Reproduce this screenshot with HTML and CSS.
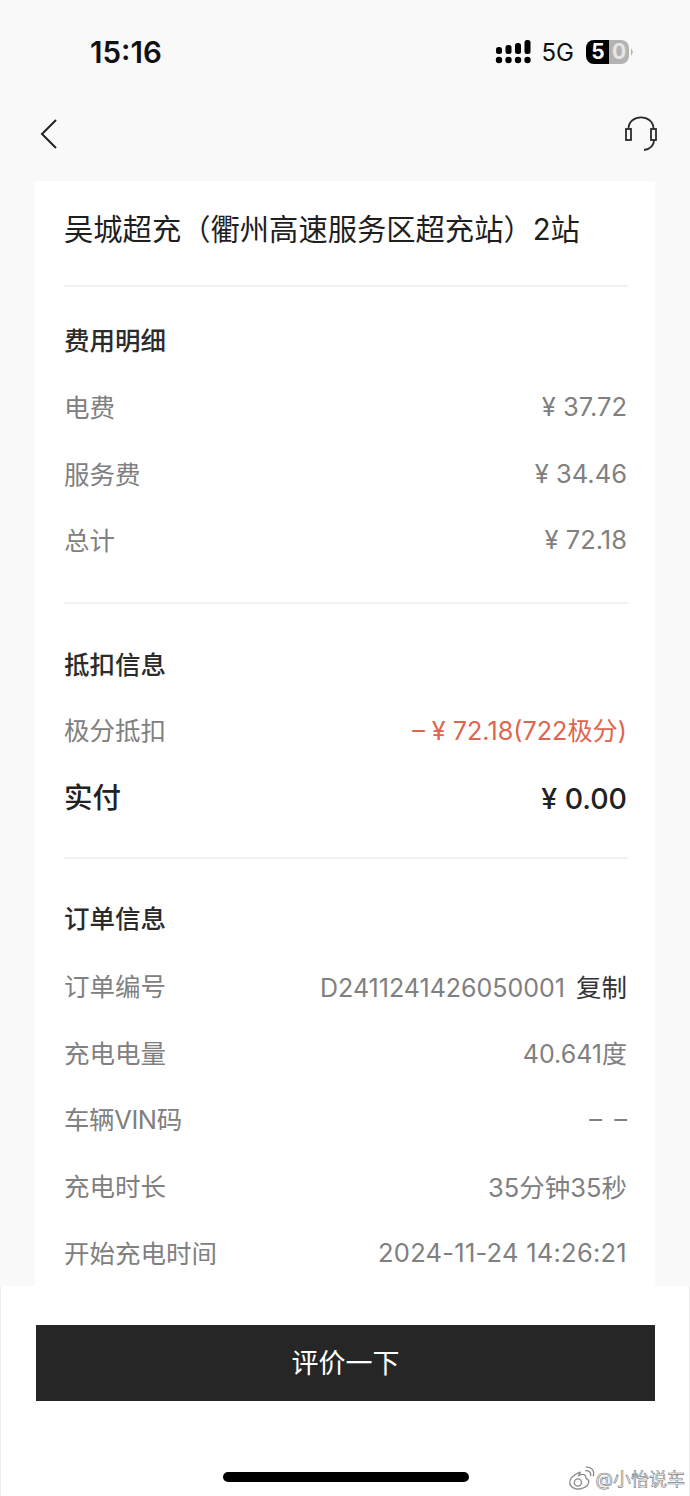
FILE: index.html
```html
<!DOCTYPE html>
<html lang="zh">
<head>
    <meta charset="UTF-8">
    <meta name="viewport" content="width=device-width, initial-scale=1.0">
    <title>订单详情</title>
    <link rel="stylesheet" href="styles.css">
</head>
<body>
    <div class="status-bar">
        <span class="time">15:16</span>
        <div class="status-icons">
            <svg class="signal" width="36" height="24" viewBox="0 0 36 24" fill="#000">
                <rect x="1" y="7" width="6" height="7" rx="2.5"/>
                <rect x="10.500" y="5" width="6" height="9" rx="2.5"/>
                <rect x="20" y="3" width="6" height="11" rx="2.500"/>
                <rect x="29.500" y="0" width="6" height="14" rx="2.500"/>
                <circle cx="4" cy="20" r="3.200"/>
                <circle cx="13.500" cy="20" r="3.200"/>
                <circle cx="23" cy="20" r="3.200"/>
                <circle cx="32.500" cy="20" r="3.200"/>
            </svg>
            <span class="network">5G</span>
            <div class="battery">
                <span class="battery-used">5</span><span class="battery-left">0</span>
            </div>
            <span class="battery-tip"></span>
        </div>
    </div>

    <div class="nav-bar">
        <svg class="back-icon" width="20" height="32" viewBox="0 0 20 32" fill="none" stroke="#222" stroke-width="2">
            <path d="M17 2 L3 16 L17 30"/>
        </svg>
        <svg width="34" height="36" viewBox="0 0 34 36" fill="none" stroke="#2b2b2b" stroke-width="1.800">
            <path d="M4.500 13 C4.500 -2.500 29.500 -2.500 29.500 13"/>
            <rect x="2" y="13" width="5" height="11"/>
            <rect x="27" y="13" width="5" height="11"/>
            <path d="M30 24 C30 30 26 33 20 34"/>
        </svg>
    </div>

    <div class="card">
        <h1 class="station">吴城超充（衢州高速服务区超充站）2站</h1>

        <section class="block block-fee">
            <h2>费用明细</h2>
            <div class="row"><span>电费</span><span>¥ 37.72</span></div>
            <div class="row"><span>服务费</span><span>¥ 34.46</span></div>
            <div class="row"><span>总计</span><span>¥ 72.18</span></div>
        </section>

        <section class="block block-discount">
            <h2>抵扣信息</h2>
            <div class="row"><span>极分抵扣</span><span class="minus">– ¥ 72.18(722极分)</span></div>
            <div class="row row-total"><span>实付</span><span>¥ 0.00</span></div>
        </section>

        <section class="block block-order">
            <h2>订单信息</h2>
            <div class="row"><span>订单编号</span><span><span class="order-no">D2411241426050001</span><b class="copy">复制</b></span></div>
            <div class="row"><span>充电电量</span><span class="energy">40.641度</span></div>
            <div class="row"><span class="vin">车辆VIN码</span><span class="empty">– –</span></div>
            <div class="row"><span>充电时长</span><span>35分钟35秒</span></div>
            <div class="row"><span>开始充电时间</span><span class="date">2024-11-24 14:26:21</span></div>
        </section>
    </div>

    <div class="footer">
        <button type="button" class="rate-btn">评价一下</button>
        <div class="home-bar"></div>
        <div class="watermark">
            <svg width="27" height="26" viewBox="0 0 30 28" fill="#fff" stroke="#8a8a8a" stroke-width="1.500">
                <path d="M12 8 C5 11 1 16 2 20 C3 25 9 27 14 26 C20 25 24 21 23 17 C22 15 20 15 20 14 C20 10 17 9 12 11 C14 8 14 7 12 8 Z"/>
                <circle cx="11" cy="19" r="4"/>
                <path d="M19 6 C23 5 26 8 25 12 M20 2 C26 1 30 6 28 12" fill="none"/>
            </svg>
            <span>@小怡说车</span>
        </div>
    </div>
</body>
</html>
```

FILE: styles.css
```css
body {
    margin: 0;
    width: 690px;
    height: 1496px;
    overflow: hidden;
    background-color: #f9f9f9;
    font-family: "Inter", "Noto Sans CJK SC", sans-serif;
    color: #222;
}
.status-bar {
    height: 102px;
    box-sizing: border-box;
    padding: 33px 57px 0 90px;
    display: flex;
    justify-content: space-between;
    align-items: flex-start;
}
.time {
    font-size: 29.500px;
    line-height: 38px;
    font-weight: 600;
    color: #111;
}
.status-icons {
    display: flex;
    align-items: center;
    height: 38px;
}
.network {
    font-size: 24px;
    margin: 0 12px 0 11px;
    color: #111;
}
.battery {
    width: 43px;
    height: 24px;
    border-radius: 8px;
    overflow: hidden;
    display: flex;
    font-size: 21px;
    font-weight: 700;
    line-height: 24px;
    text-align: center;
    background-color: #b3b3b3;
    color: #fff;
}
.battery-used {
    width: 22px;
    background-color: #000;
    padding-left: 1px;
}
.battery-left {
    width: 20px;
    color: #e6e6e6;
}
.battery-tip {
    width: 0;
    height: 0;
    margin-left: 2px;
    border-top: 4px solid transparent;
    border-bottom: 4px solid transparent;
    border-left: 2px solid #b3b3b3;
}
.nav-bar {
    height: 79px;
    box-sizing: border-box;
    padding: 14px 32px 0 39px;
    display: flex;
    justify-content: space-between;
    align-items: flex-start;
}
.back-icon {
    margin-top: 2px;
}
.card {
    margin: 0 35px;
    height: 1105px;
    box-sizing: border-box;
    padding: 0 27px 0 29px;
    background-color: #fff;
    overflow: hidden;
}
.station {
    margin: 0;
    height: 106px;
    box-sizing: border-box;
    padding-top: 29px;
    font-size: 29.300px;
    line-height: 40px;
    font-weight: 400;
    color: #1f1f1f;
    border-bottom: 2px solid #f1f1f1;
}
.block {
    border-bottom: 2px solid #f1f1f1;
}
.block-fee {
    height: 315px;
}
.block-discount {
    height: 253px;
}
.block-order {
    border-bottom: none;
}
.block h2 {
    margin: 0;
    box-sizing: border-box;
    font-size: 25.500px;
    line-height: 36px;
    font-weight: 500;
    color: #2b2b2b;
}
.block-fee h2 {
    height: 86px;
    padding-top: 36px;
}
.block-discount h2 {
    height: 92px;
    padding-top: 43px;
}
.block-order h2 {
    height: 93px;
    padding-top: 42px;
}
.row {
    height: 66.800px;
    display: flex;
    justify-content: space-between;
    align-items: center;
    font-size: 25.500px;
    color: #808080;
    padding-right: 1px;
}
.row > span:first-child {
    margin-bottom: 2px;
}
.minus {
    font-size: 25.200px;
    color: #de6650;
}
.order-no {
    font-size: 25px;
}
.energy {
    font-size: 25px;
}
.vin {
    letter-spacing: -0.400px;
}
.empty {
    word-spacing: 5px;
}
.date {
    letter-spacing: 0.250px;
}
.row-total {
    font-size: 28.500px;
    font-weight: 500;
    color: #222;
}
.row-total > span:last-child {
    margin-top: 4px;
}
.copy {
    font-weight: 400;
    color: #333;
    margin-left: 11px;
}
.footer {
    height: 210px;
    box-sizing: border-box;
    padding: 39px 34px 0 35px;
    background-color: #fff;
    border-left: 1px solid #eee;
    border-right: 1px solid #eee;
    position: relative;
}
.rate-btn {
    display: block;
    width: 100%;
    height: 76px;
    border: none;
    padding-bottom: 4px;
    background-color: #262626;
    color: #fff;
    font-family: inherit;
    font-size: 27px;
    font-weight: 400;
}
.home-bar {
    width: 246px;
    height: 10px;
    margin: 71px 0 0 187px;
    border-radius: 5px;
    background-color: #000;
}
.watermark {
    position: absolute;
    right: 4px;
    bottom: 5px;
    display: flex;
    align-items: center;
    font-size: 18px;
    color: #fff;
    -webkit-text-stroke: 0.6px #777;
}
.watermark svg {
    margin-right: 1px;
}
```
